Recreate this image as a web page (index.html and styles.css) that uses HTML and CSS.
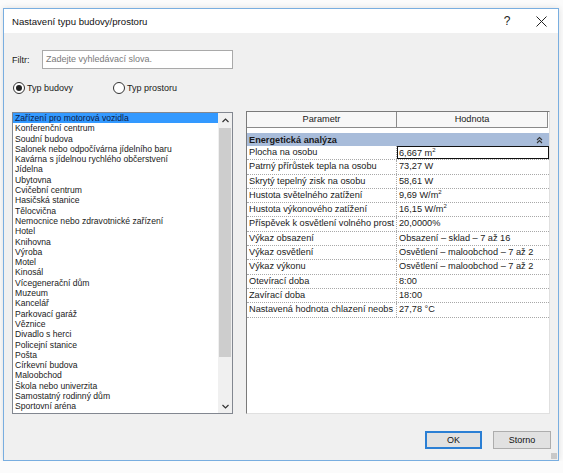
FILE: index.html
```html
<!DOCTYPE html>
<html lang="cs">
<head>
  <meta charset="UTF-8" />
  <meta name="viewport" content="width=device-width, initial-scale=1.0"/>
  <title>Nastavení typu budovy/prostoru</title>
  <link rel="stylesheet" href="styles.css">
</head>
<body>

  <div class="dialog">
    <div class="titlebar">
      <span class="title">Nastavení typu budovy/prostoru</span>
      <span class="tb-btn help">?</span>
      <span class="tb-btn close">
        <svg width="11" height="11" viewBox="0 0 11 11"><path d="M0.5 0.5 L10.5 10.5 M10.5 0.5 L0.5 10.5" stroke="#222" stroke-width="1" fill="none"/></svg>
      </span>
    </div>

    <div class="content">
      <div class="filter-row">
        <span class="label">Filtr:</span>
        <div class="search">Zadejte vyhledávací slova.</div>
      </div>

      <div class="radio-row">
        <div class="radio checked"><span class="circle"></span>Typ budovy</div>
        <div class="radio"><span class="circle"></span>Typ prostoru</div>
      </div>

      <div class="main">
        <div class="listbox">
          <ul class="items">
            <li class="selected">Zařízení pro motorová vozidla</li>
            <li>Konferenční centrum</li>
            <li>Soudní budova</li>
            <li>Salonek nebo odpočívárna jídelního baru</li>
            <li>Kavárna s jídelnou rychlého občerstvení</li>
            <li>Jídelna</li>
            <li>Ubytovna</li>
            <li>Cvičební centrum</li>
            <li>Hasičská stanice</li>
            <li>Tělocvična</li>
            <li>Nemocnice nebo zdravotnické zařízení</li>
            <li>Hotel</li>
            <li>Knihovna</li>
            <li>Výroba</li>
            <li>Motel</li>
            <li>Kinosál</li>
            <li>Vícegenerační dům</li>
            <li>Muzeum</li>
            <li>Kancelář</li>
            <li>Parkovací garáž</li>
            <li>Věznice</li>
            <li>Divadlo s herci</li>
            <li>Policejní stanice</li>
            <li>Pošta</li>
            <li>Církevní budova</li>
            <li>Maloobchod</li>
            <li>Škola nebo univerzita</li>
            <li>Samostatný rodinný dům</li>
            <li>Sportovní aréna</li>
          </ul>
          <div class="scrollbar">
            <div class="arrow">
              <svg width="7" height="5" viewBox="0 0 7 5"><path d="M0.5 4 L3.5 1 L6.5 4" stroke="#333" stroke-width="1.2" fill="none"/></svg>
            </div>
            <div class="track"><div class="thumb"></div></div>
            <div class="arrow">
              <svg width="7" height="5" viewBox="0 0 7 5"><path d="M0.5 1 L3.5 4 L6.5 1" stroke="#333" stroke-width="1.2" fill="none"/></svg>
            </div>
          </div>
        </div>

        <div class="grid">
          <div class="grid-head">
            <div class="head-cell">Parametr</div>
            <div class="head-cell">Hodnota</div>
          </div>
          <div class="group">
            <span>Energetická analýza</span>
            <svg width="7" height="8" viewBox="0 0 7 8"><path d="M1 4 L3.5 1.5 L6 4 M1 7 L3.5 4.5 L6 7" stroke="#333" stroke-width="1.1" fill="none"/></svg>
          </div>
          <div class="row"><div class="name">Plocha na osobu</div><div class="value edit">6,667 m<sup>2</sup></div></div>
          <div class="row"><div class="name">Patrný přírůstek tepla na osobu</div><div class="value">73,27 W</div></div>
          <div class="row"><div class="name">Skrytý tepelný zisk na osobu</div><div class="value">58,61 W</div></div>
          <div class="row"><div class="name">Hustota světelného zatížení</div><div class="value">9,69 W/m<sup>2</sup></div></div>
          <div class="row"><div class="name">Hustota výkonového zatížení</div><div class="value">16,15 W/m<sup>2</sup></div></div>
          <div class="row"><div class="name">Příspěvek k osvětlení volného prost</div><div class="value">20,0000%</div></div>
          <div class="row"><div class="name">Výkaz obsazení</div><div class="value">Obsazení – sklad – 7 až 16</div></div>
          <div class="row"><div class="name">Výkaz osvětlení</div><div class="value">Osvětlení – maloobchod – 7 až 2</div></div>
          <div class="row"><div class="name">Výkaz výkonu</div><div class="value">Osvětlení – maloobchod – 7 až 2</div></div>
          <div class="row"><div class="name">Otevírací doba</div><div class="value">8:00</div></div>
          <div class="row"><div class="name">Zavírací doba</div><div class="value">18:00</div></div>
          <div class="row"><div class="name">Nastavená hodnota chlazení neobs</div><div class="value">27,78 °C</div></div>
        </div>
      </div>

      <div class="buttons">
        <button class="btn default">OK</button>
        <button class="btn">Storno</button>
      </div>
      <span class="grip"></span>
    </div>
  </div>

</body>
</html>
```

FILE: styles.css
```css
* {
  box-sizing: border-box;
  padding: 0;
  margin: 0;
}

body {
  font-family: 'Liberation Sans', Arial, sans-serif;
  font-size: 9px;
  color: #1a1a1a;
  background: #fbfbfb;
  padding: 8px 0 0 3px;
}

.dialog {
  width: 556px;
  height: 453px;
  border: 1px solid #79aee0;
  box-shadow: 0 0 6px rgba(0,0,0,0.12);
  display: flex;
  flex-direction: column;
  background: #f0f0f0;
}

.titlebar {
  height: 24px;
  background: white;
  display: flex;
  align-items: center;
  padding-left: 8px;
}

.title {
  flex: 1;
  font-size: 9.6px;
  color: #111;
}

.tb-btn {
  width: 34px;
  height: 24px;
  display: flex;
  align-items: center;
  justify-content: center;
}

.help {
  font-size: 12px;
  color: #222;
}

.content {
  flex: 1;
  position: relative;
  padding: 17px 8px 0 8px;
  display: flex;
  flex-direction: column;
}

.filter-row {
  display: flex;
  align-items: center;
  height: 19px;
}

.label {
  width: 30px;
  font-size: 9px;
}

.search {
  width: 191px;
  height: 19px;
  border: 1px solid #a9a9a9;
  background: white;
  color: #7a7a7a;
  font-size: 9px;
  line-height: 17px;
  padding-left: 3px;
}

.radio-row {
  display: flex;
  margin-top: 13px;
  height: 12px;
  align-items: center;
}

.radio {
  display: flex;
  align-items: center;
  gap: 2px;
  width: 99px;
  font-size: 9px;
  margin-left: 1px;
}

.circle {
  width: 12px;
  height: 12px;
  border: 1px solid #333;
  border-radius: 50%;
  background: white;
  display: flex;
  align-items: center;
  justify-content: center;
}

.radio.checked .circle::after {
  content: '';
  width: 6px;
  height: 6px;
  border-radius: 50%;
  background: #222;
}

.main {
  display: flex;
  gap: 13px;
  margin-top: 17px;
  height: 303px;
}

.listbox {
  width: 221px;
  margin-top: 1px;
  border: 1px solid #828790;
  background: white;
  display: flex;
}

.items {
  flex: 1;
  list-style: none;
}

.items li {
  height: 10.3px;
  line-height: 10.3px;
  padding-left: 2px;
  white-space: nowrap;
  font-size: 8.6px;
}

.items li.selected {
  background: #3399ff;
  color: #0c1c48;
}

.scrollbar {
  width: 14px;
  background: #f0f0f0;
  display: flex;
  flex-direction: column;
}

.arrow {
  height: 14px;
  display: flex;
  align-items: center;
  justify-content: center;
}

.track {
  flex: 1;
  padding: 1px 1px;
}

.thumb {
  height: 229px;
  background: #cdcdcd;
}

.grid {
  flex: 1;
  background: white;
  border-top: 1px solid #7a7a7a;
  border-left: 1px solid #7a7a7a;
  border-right: 1px solid #e0e0e0;
  border-bottom: 1px solid #e0e0e0;
  font-size: 9.2px;
}

.grid-head {
  display: flex;
  height: 16px;
  width: 301px;
  background: #f7f7f7;
  margin-bottom: 5px;
}

.head-cell {
  width: 150px;
  text-align: center;
  line-height: 14px;
  border: 1px solid #8a8a8a;
  border-left: none;
  border-top: none;
}

.head-cell + .head-cell {
  width: 151px;
}

.group {
  height: 13px;
  width: 302px;
  background: #a8bcda;
  font-weight: bold;
  display: flex;
  align-items: center;
  justify-content: space-between;
  padding: 0 6px 0 2px;
}

.row {
  display: flex;
  height: 14.3px;
  width: 302px;
  border-bottom: 1px dotted #a8a8a8;
  line-height: 13px;
}

.name {
  width: 150px;
  padding-left: 2px;
  border-right: 1px dotted #a8a8a8;
  white-space: nowrap;
  overflow: hidden;
}

.value {
  flex: 1;
  padding-left: 2px;
  white-space: nowrap;
  overflow: hidden;
}

.value.edit {
  border: 1px solid #111;
  line-height: 12px;
  padding-left: 1px;
}

sup {
  font-size: 6px;
  line-height: 0;
}

.buttons {
  display: flex;
  justify-content: flex-end;
  gap: 11px;
  margin-top: 17px;
  margin-right: -1px;
}

.btn {
  width: 58px;
  height: 18px;
  font-family: 'Liberation Sans', Arial, sans-serif;
  font-size: 9px;
  color: #111;
  background: #e1e1e1;
  border: 1px solid #adadad;
}

.btn.default {
  width: 57px;
  border: 2px solid #2b7fd4;
}

.grip {
  position: absolute;
  right: 1px;
  bottom: 1px;
  width: 6px;
  height: 6px;
  background: radial-gradient(circle, #9a9a9a 0.6px, transparent 0.8px) 0 0 / 2px 2px;
}
```
